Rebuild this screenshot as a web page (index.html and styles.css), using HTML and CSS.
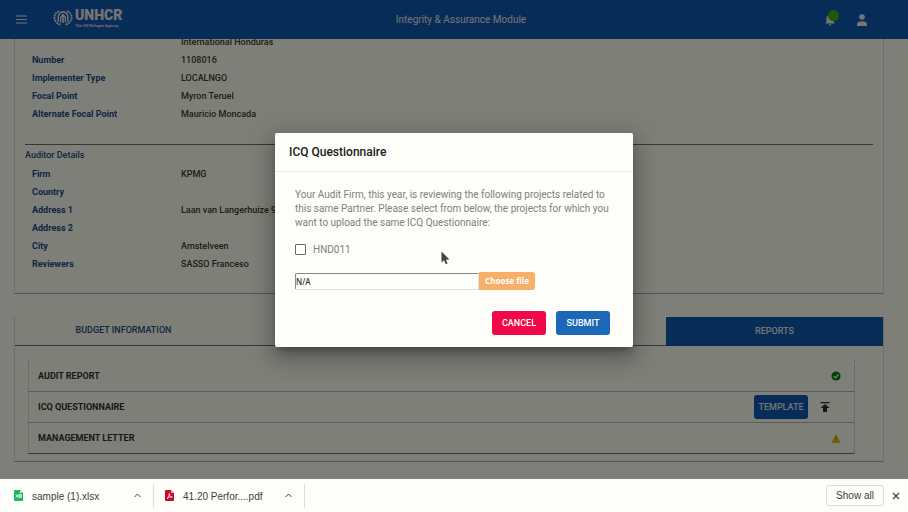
FILE: index.html
```html
<!DOCTYPE html>
<html lang="en">
<head>
<meta charset="utf-8">
<title>Integrity &amp; Assurance Module</title>
<link rel="stylesheet" href="styles.css">
</head>
<body>
<div class="app">
  <header class="topbar">
    <button class="icon-button menu" aria-label="Menu">
      <svg width="11" height="9" viewBox="0 0 11 9"><path d="M0 1h11M0 4.5h11M0 8h11" stroke="currentColor" stroke-width="1.2"/></svg>
    </button>
    <a class="brand" href="#" aria-label="UNHCR home">
      <svg width="20" height="16" viewBox="0 0 20 16" fill="none" stroke="currentColor">
        <path d="M6 1C2.5 3 1 5.500 1.500 8.500S4 13.500 8 15M14 1c3.500 2 5 4.500 4.500 7.500S16 13.500 12 15" stroke-width="1.800" stroke-dasharray="2 .7"/>
        <path d="M5.200 12V6.500Q6 2.200 10 1.800Q14 2.200 14.800 6.500V12M7.600 12.500V7.500L10 4.500L12.400 7.500V12.500" stroke-width="1.400"/>
        <path d="M10 7.500V13" stroke-width="1.600"/><circle cx="10" cy="6.400" r="1.100" fill="currentColor" stroke="none"/>
      </svg>
      <span class="brand-text"><b>UNHCR</b><small>The UN Refugee Agency</small></span>
    </a>
    <h1 class="app-title">Integrity &amp; Assurance Module</h1>
    <div class="top-actions">
      <button class="icon-button bell" aria-label="Notifications">
        <svg width="10" height="12" viewBox="0 0 10 12" fill="currentColor"><path d="M5 0a1 1 0 0 1 1 1.100C7.800 1.600 8.600 3 8.600 5v3L10 9.500H0L1.400 8V5C1.400 3 2.200 1.600 4 1.100A1 1 0 0 1 5 0zM3.700 10.200h2.600a1.300 1.300 0 0 1-2.600 0z"/></svg>
        <span class="badge"></span>
      </button>
      <button class="icon-button" aria-label="Account">
        <svg width="10" height="12" viewBox="0 0 10 12" fill="currentColor"><circle cx="5" cy="3" r="2.800"/><path d="M0 12V10Q.5 7.200 5 7.200T10 10v2z"/></svg>
      </button>
    </div>
  </header>

  <main class="content">
    <section class="card details">
      <dl class="facts">
        <dt></dt><dd>International Honduras</dd>
        <dt>Number</dt><dd>1108016</dd>
        <dt>Implementer Type</dt><dd>LOCALNGO</dd>
        <dt>Focal Point</dt><dd>Myron Teruel</dd>
        <dt>Alternate Focal Point</dt><dd>Mauricio Moncada</dd>
      </dl>
      <h2 class="section-title">Auditor Details</h2>
      <dl class="facts">
        <dt>Firm</dt><dd>KPMG</dd>
        <dt>Country</dt><dd></dd>
        <dt>Address 1</dt><dd>Laan van Langerhuize 9</dd>
        <dt>Address 2</dt><dd></dd>
        <dt>City</dt><dd>Amstelveen</dd>
        <dt>Reviewers</dt><dd>SASSO Franceso</dd>
      </dl>
    </section>

    <section class="card">
      <nav class="tabs">
        <button class="tab">BUDGET INFORMATION</button>
        <button class="tab tab-active">REPORTS</button>
      </nav>
      <ul class="reports">
        <li>
          <span>AUDIT REPORT</span>
          <svg class="status ok" width="10" height="10" viewBox="0 0 10 10"><circle cx="5" cy="5" r="4.600" fill="currentColor"/><path d="M2.700 5.100l1.700 1.700 3-3.300" fill="none" stroke="#fff" stroke-width="1.200"/></svg>
        </li>
        <li>
          <span>ICQ QUESTIONNAIRE</span>
          <button class="button template">TEMPLATE</button>
          <button class="icon-button upload" aria-label="Upload">
            <svg width="10" height="10" viewBox="0 0 10 10" fill="currentColor"><path d="M.5 0h9v1.300h-9zM5 2l4.500 4H7v4H3V6H.5z"/></svg>
          </button>
        </li>
        <li>
          <span>MANAGEMENT LETTER</span>
          <svg class="status warn" width="10" height="9" viewBox="0 0 10 9"><path d="M5 0l5 9H0z" fill="currentColor"/><path d="M5 3v3M5 6.800v1" stroke="#a08000" stroke-width=".8"/></svg>
        </li>
      </ul>
    </section>
  </main>

  <div class="backdrop">
    <form class="dialog" role="dialog" aria-labelledby="dialog-title">
      <h2 class="dialog-title" id="dialog-title">ICQ Questionnaire</h2>
      <div class="dialog-body">
        <p>Your Audit Firm, this year, is reviewing the following projects related to this same Partner. Please select from below, the projects for which you want to upload the same ICQ Questionnaire:</p>
        <label class="project"><input type="checkbox">HND011</label>
        <div class="file-row">
          <input class="file-name" type="text" value="N/A" aria-label="Selected file" readonly>
          <button class="choose" type="button">Choose file</button>
        </div>
        <div class="dialog-actions">
          <button class="button cancel" type="button">CANCEL</button>
          <button class="button submit" type="button">SUBMIT</button>
        </div>
      </div>
      <svg class="pointer" width="9" height="14" viewBox="0 0 9 14"><path d="M.5.5v11l2.500-2.200 1.800 4 1.800-.8-1.700-3.800 3.600-.2z" fill="#444"/></svg>
    </form>
  </div>
</div>

<footer class="downloads">
  <div class="download">
    <svg width="9" height="11" viewBox="0 0 9 11"><path d="M1 0h5l3 3v7a1 1 0 0 1-1 1H1a1 1 0 0 1-1-1V1a1 1 0 0 1 1-1z" fill="#1fb85a"/><path d="M6 0l3 3H6z" fill="#a6e6bd"/><path d="M2 4.500l2.500 3M4.500 4.500L2 7.500M5.200 4.700h2v2.600h-2z" fill="none" stroke="#fff"/></svg>
    <span>sample (1).xlsx</span>
    <button class="icon-button" aria-label="Options for sample (1).xlsx"><svg width="7" height="5" viewBox="0 0 7 5"><path d="M.5 4l3-3 3 3" fill="none" stroke="currentColor"/></svg></button>
  </div>
  <div class="download">
    <svg width="9" height="11" viewBox="0 0 9 11"><path d="M1 0h5l3 3v7a1 1 0 0 1-1 1H1a1 1 0 0 1-1-1V1a1 1 0 0 1 1-1z" fill="#c40d28"/><path d="M6 0l3 3H6z" fill="#ee9ca8"/><path d="M2 8.500C4 7 4.500 5 4.200 3.500 4.300 6 5.500 7 7.300 7 5 6.700 3.500 7.200 2 8.500z" fill="none" stroke="#fff" stroke-width=".8"/></svg>
    <span>41.20 Perfor....pdf</span>
    <button class="icon-button" aria-label="Options for 41.20 Perfor....pdf"><svg width="7" height="5" viewBox="0 0 7 5"><path d="M.5 4l3-3 3 3" fill="none" stroke="currentColor"/></svg></button>
  </div>
  <button class="show-all">Show all</button>
  <button class="icon-button" aria-label="Close"><svg width="8" height="8" viewBox="0 0 8 8"><path d="M1 1l6 6M7 1L1 7" stroke="currentColor" stroke-width="1.200"/></svg></button>
</footer>
</body>
</html>
```

FILE: styles.css
```css
* { box-sizing: border-box; }
body {
  margin: 0;
  height: 100vh;
  display: flex;
  flex-direction: column;
  overflow: hidden;
  font-family: Roboto, "Liberation Sans", sans-serif;
  font-size: 9px;
  background: #fdfdfa;
}
h1, h2, p, dl, dd, ul { margin: 0; padding: 0; }
button { font: inherit; border: 0; padding: 0; background: none; color: inherit; }
svg { display: block; flex: none; }
.icon-button { display: flex; align-items: center; justify-content: center; }

.app {
  position: relative;
  flex: 1;
  min-height: 0;
  overflow: hidden;
  background: #fefef2;
}

/* Top bar */
.topbar {
  position: relative;
  z-index: 1;
  height: 39px;
  padding: 0 41px 0 16px;
  display: grid;
  grid-template-columns: 37px 1fr auto 1fr;
  align-items: center;
  background: #1058b0;
  color: #e8e8e8;
}
.menu { justify-self: start; }
.brand {
  display: flex;
  align-items: center;
  gap: 2px;
  margin-bottom: 4px;
  color: inherit;
  text-decoration: none;
}
.brand-text { display: flex; flex-direction: column; }
.brand-text b { font: 900 14px/16px Roboto, sans-serif; }
.brand-text small { font-size: 4px; line-height: 5px; font-weight: 500; }
.app-title { font-size: 10px; font-weight: 400; margin-left: 2px; }
.top-actions { display: flex; justify-content: flex-end; gap: 22px; }
.bell { position: relative; }
.badge {
  position: absolute;
  top: -4px;
  right: -4px;
  width: 11px;
  height: 11px;
  border-radius: 50%;
  background: #48a808;
}

/* Page */
.content {
  margin-top: -6px;
  padding: 0 24px 0 14px;
  display: flex;
  flex-direction: column;
  gap: 23px;
}
.card {
  border: 1px dotted #b8b8b4;
  border-top: 0;
  border-bottom: 1px solid #a8a8a8;
}
.details { padding: 0 10px 20px; }
.facts {
  display: grid;
  grid-template-columns: 149px 1fr;
  grid-auto-rows: 18px;
  align-items: center;
  padding-left: 7px;
  font-weight: 500;
  color: #404028;
}
.facts dt { color: #1c4c84; font-weight: 700; }
.section-title {
  margin-top: 21px;
  padding: 1px 0;
  border-top: 1px solid #70705c;
  font-size: 9px;
  line-height: 18px;
  font-weight: 500;
  color: #1c4c84;
}

.tabs {
  display: grid;
  grid-template-columns: repeat(4, 1fr);
  height: 29px;
  border-bottom: 1px solid #707068;
}
.tab { padding-bottom: 2px; color: #1c4c84; font-weight: 500; }
.tab-active { grid-column: 4; background: #1058b0; color: #e8e8e8; margin-bottom: -1px; }

.reports {
  list-style: none;
  margin: 14px 28px 7px 13px;
  border: 1px dotted #b8b8b4;
  border-top: 0;
  border-bottom: 1px solid #707068;
  font-weight: 700;
  color: #303030;
}
.reports li {
  height: 31px;
  padding: 0 13px 0 9px;
  display: flex;
  align-items: center;
}
.reports li + li { border-top: 1px solid #b8b8b4; }
.reports span { flex: 1; }
.ok { color: #048010; }
.warn { color: #e8c010; }
.button {
  width: 54px;
  height: 24px;
  border-radius: 3px;
  font-size: 9px;
  font-weight: 500;
  color: #fff;
}
.template { background: #1058b0; color: #e8e8e8; }
.upload { margin: 0 11px 0 12px; color: #303030; }

/* Dialog */
.backdrop {
  position: absolute;
  inset: 0;
  z-index: 2;
  display: flex;
  align-items: center;
  justify-content: center;
  background: rgba(0, 0, 0, .5);
}
.dialog {
  position: relative;
  width: 358px;
  max-width: 90%;
  border-radius: 2px;
  background: #fdfdfa;
  box-shadow: 0 6px 8px -3px rgba(0, 0, 0, .3), 0 12px 20px 2px rgba(0, 0, 0, .16), 0 4px 26px 5px rgba(0, 0, 0, .16);
}
.dialog-title {
  padding: 0 14px;
  font-size: 12px;
  line-height: 38px;
  font-weight: 500;
  color: #202020;
  border-bottom: 1px solid #ececf0;
}
.dialog-body { padding: 16px 23px 12px 20px; }
.dialog-body p { font-size: 10px; line-height: 14px; color: #80807c; margin-right: -8px; }
.project {
  display: flex;
  align-items: center;
  gap: 7px;
  height: 14px;
  margin-top: 13px;
  font-size: 10px;
  color: #80807c;
}
.project input {
  appearance: none;
  width: 11px;
  height: 11px;
  margin: 0;
  border: 1px solid #686860;
  border-radius: 1px;
}
.file-row { display: flex; margin-top: 15px; height: 18px; }
.file-name {
  width: 184px;
  margin-top: 1px;
  padding: 0;
  border: 1px solid #e0e0e0;
  border-top: 1px solid #888880;
  border-left-color: #888880;
  border-radius: 2px 0 0 2px;
  background: transparent;
  font: 500 8px "Noto Sans", sans-serif;
  color: #303030;
}
.choose {
  width: 56px;
  border-radius: 0 3px 3px 0;
  background: #f8b068;
  color: #fff;
  font: 700 8px "Noto Sans", sans-serif;
}
.dialog-actions { display: flex; justify-content: flex-end; gap: 10px; margin-top: 21px; }
.cancel { background: #f00848; }
.submit { background: #1c68b8; }
.pointer { position: absolute; left: 166px; top: 118px; }

/* Downloads */
.downloads {
  height: 33px;
  display: flex;
  align-items: center;
  padding: 0 8px 0 0;
  font: 10px "Liberation Sans", sans-serif;
  color: #404040;
}
.download {
  display: flex;
  align-items: center;
  width: 151px;
  height: 24px;
  padding: 0 12px 0 11px;
  gap: 9px;
  border-right: 1px solid #dcdcdc;
}
.download:first-child { width: 154px; padding-left: 14px; }
.download span { flex: 1; padding-top: 2px; }
.show-all {
  margin-left: auto;
  margin-right: 8px;
  width: 58px;
  height: 21px;
  border: 1px solid #dcdce0;
  border-radius: 3px;
}
```
